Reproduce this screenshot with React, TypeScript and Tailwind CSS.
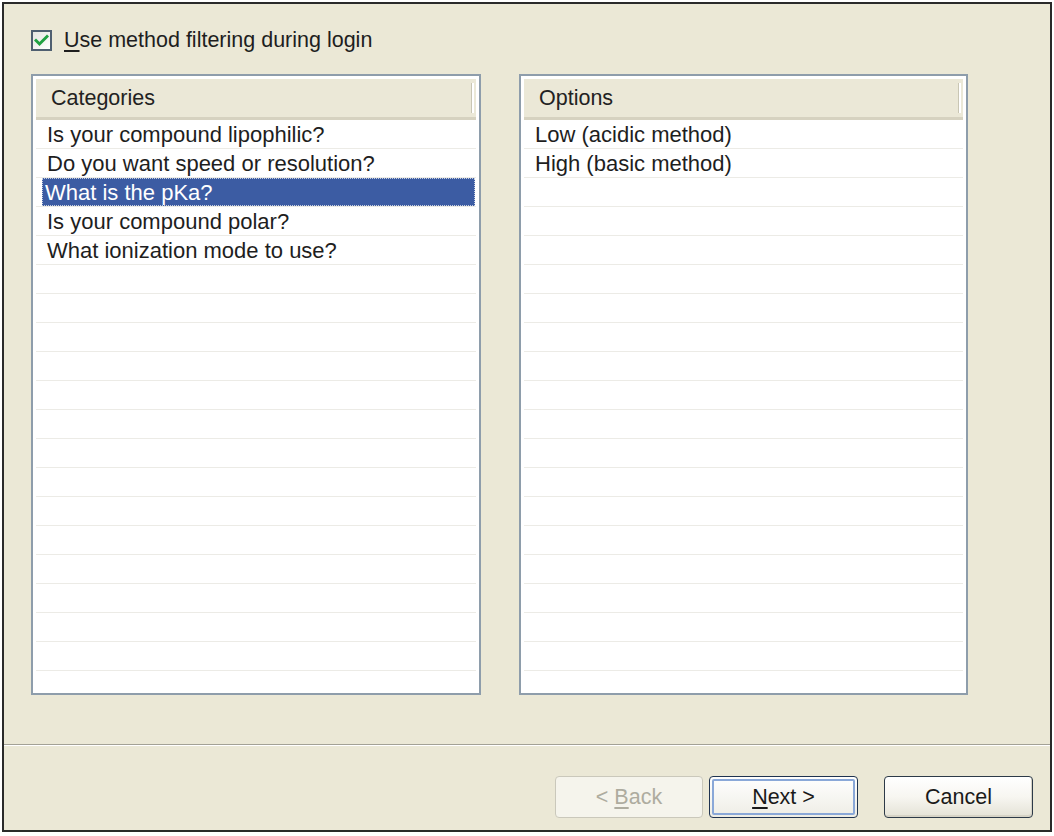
import React from "react";

const leftItems = [
  "Is your compound lipophilic?",
  "Do you want speed or resolution?",
  "What is the pKa?",
  "Is your compound polar?",
  "What ionization mode to use?",
];
const rightItems = ["Low (acidic method)", "High (basic method)"];

function ListBox({
  title,
  items,
  selected,
  width,
}: {
  title: string;
  items: string[];
  selected?: number;
  width: string;
}) {
  const rows = Array.from({ length: 21 }, (_, i) => items[i] ?? "");
  return (
    <div className={`${width} h-[621px] border-2 border-[#8e9dab] bg-white p-[3px] flex flex-col overflow-hidden`}>
      <div className="h-[41px] shrink-0 bg-[#ebe8d7] border-b-[3px] border-[#d6d2c0] flex items-center">
        <span className="flex-1 pl-[15px] text-[21.5px] text-[#222]">{title}</span>
        <div className="w-[3px] h-[30px] border-l border-[#c9c6b4] border-r-2 border-r-white mr-[2px]" />
      </div>
      <div className="flex-1 overflow-hidden">
        {rows.map((t, i) => (
          <div key={i} className="h-[29px] border-b border-[#ecebe6] flex items-stretch">
            {i === selected ? (
              <div className="ml-[6px] mr-[1px] flex-1 bg-[#3c5ca3] text-white outline-1 outline-dotted outline-[#c8d0e0] -outline-offset-1 flex items-center pl-[3px] text-[22px]">
                {t}
              </div>
            ) : (
              <div className="flex items-center pl-[11px] text-[22px] text-[#1e1e1e]">{t}</div>
            )}
          </div>
        ))}
      </div>
    </div>
  );
}

function Button({
  children,
  variant,
}: {
  children: React.ReactNode;
  variant: "disabled" | "default" | "normal";
}) {
  if (variant === "disabled") {
    return (
      <div className="w-[148px] h-[42px] rounded-[4px] border border-[#cac8bb] bg-[#f5f4ec] flex items-center justify-center text-[21.5px] text-[#aeac9f]">
        {children}
      </div>
    );
  }
  if (variant === "default") {
    return (
      <div className="w-[149px] h-[42px] rounded-[4px] border border-[#1f3350] bg-gradient-to-b from-[#ffffff] to-[#eeede5] p-[2px]">
        <div className="w-full h-full rounded-[2px] border-2 border-[#8aa8d8] flex items-center justify-center text-[21.5px] text-[#1a1a1a]">
          {children}
        </div>
      </div>
    );
  }
  return (
    <div className="w-[149px] h-[42px] rounded-[4px] border border-[#2d3a48] bg-gradient-to-b from-[#ffffff] via-[#f7f6f1] to-[#e4e2d6] flex items-center justify-center text-[21.5px] text-[#1a1a1a] shadow-[inset_-1px_-2px_0_#d6d3c6]">
      {children}
    </div>
  );
}

export default function App() {
  return (
    <div
      className="w-[1054px] h-[836px] bg-white pt-[2px] pl-[2px]"
      style={{ fontFamily: '"Liberation Sans", Arial, sans-serif' }}
    >
      <div className="w-[1050px] h-[830px] border-2 border-[#2a2a2a] bg-[#ebe8d6] flex flex-col">
        <div className="mt-[25px] ml-[27px] h-[22px] flex items-center">
          <div className="w-[21px] h-[21px] border-2 border-[#4f5f70] bg-gradient-to-br from-[#e6e6e0] to-[#ffffff] flex items-center justify-center">
            <svg width="15" height="13" viewBox="0 0 15 13">
              <path d="M2 6.5 L5.5 10 L13 2.5" fill="none" stroke="#21a142" strokeWidth="3" strokeLinecap="square" />
            </svg>
          </div>
          <span className="ml-[12px] text-[21.5px] text-[#1e1e1e]">
            <span className="underline underline-offset-[3px]">U</span>se method filtering during login
          </span>
        </div>

        <div className="mt-[23px] ml-[27px] flex gap-[38px]">
          <ListBox title="Categories" items={leftItems} selected={2} width="w-[450px]" />
          <ListBox title="Options" items={rightItems} width="w-[449px]" />
        </div>

        <div className="mt-[49px] h-[2px] border-t border-[#a3a196] border-b border-b-white" />

        <div className="mt-[30px] flex justify-end pr-[17px]">
          <Button variant="disabled">
            &lt;&nbsp;<span className="underline underline-offset-[3px]">B</span>ack
          </Button>
          <div className="w-[6px]" />
          <Button variant="default">
            <span className="underline underline-offset-[3px]">N</span>ext &gt;
          </Button>
          <div className="w-[26px]" />
          <Button variant="normal">Cancel</Button>
        </div>
      </div>
    </div>
  );
}
